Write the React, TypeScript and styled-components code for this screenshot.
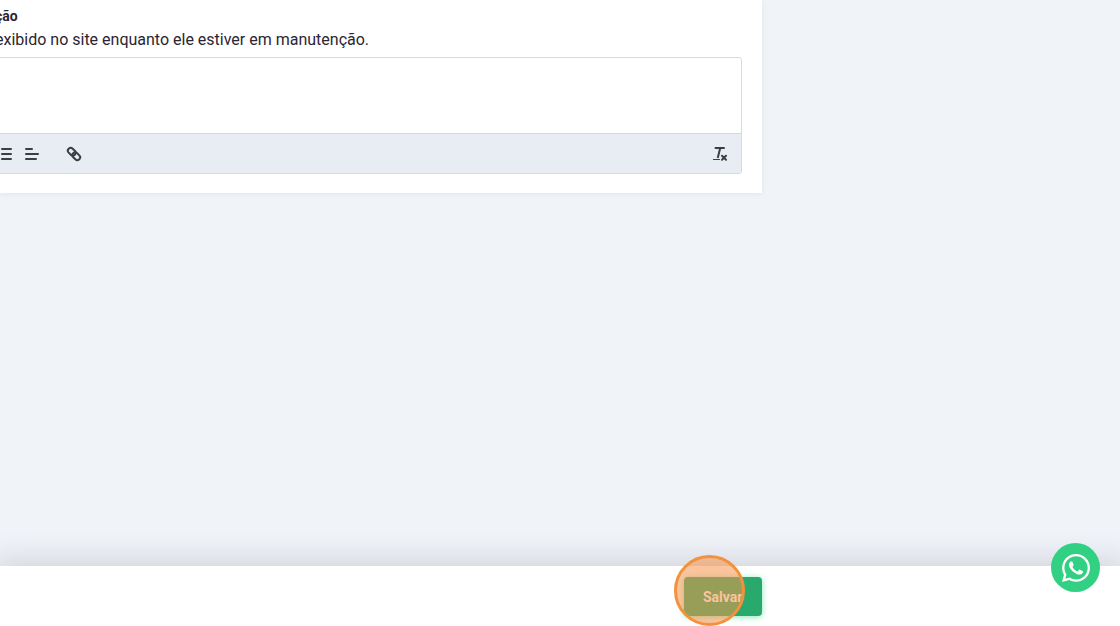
import React from "react";
import styled, { createGlobalStyle } from "styled-components";
import { FaWhatsapp } from "react-icons/fa";

const GlobalStyle = createGlobalStyle`
  *, *::before, *::after { box-sizing: border-box; }
  body {
    margin: 0;
    background: #f0f4f9;
    color: #2b2533;
    font-family: "Liberation Sans Narrow", Roboto, sans-serif;
    font-size: 16px;
    overflow: hidden;
  }
  button, textarea { font: inherit; }
`;

const Page = styled.div`
  display: flex;
  flex-direction: column;
  min-height: 100vh;
`;

const Main = styled.main`
  flex: 1;
`;

const Card = styled.section`
  width: 68%;
  padding: 4px 20px 19px 0;
  background: #fff;
  box-shadow: 0 1px 6px rgba(60, 80, 110, 0.08);
  overflow: hidden;
`;

const Field = styled.div`
  margin-left: -5px;
`;

const Title = styled.label`
  display: block;
  font-size: 14px;
  font-weight: 700;
  line-height: 24px;
`;

const Hint = styled.p`
  margin: 0 0 6px;
  line-height: 23px;
  white-space: nowrap;
`;

const Editor = styled.div`
  border: 1px solid #d5dbe3;
  border-radius: 3px;
  overflow: hidden;
`;

const Message = styled.textarea`
  display: block;
  width: 100%;
  height: 75px;
  padding: 12px;
  border: 0;
  outline: 0;
  resize: none;
  background: #fff;
`;

const Toolbar = styled.div`
  display: flex;
  align-items: center;
  justify-content: space-between;
  height: 40px;
  padding: 0 12px 0 1px;
  border-top: 1px solid #d0d8e2;
  background: #e8edf4;
`;

const Tools = styled.div`
  display: flex;
  gap: 24px;
`;

const ToolGroup = styled.div`
  display: flex;
  gap: 8px;
`;

const Tool = styled.button`
  display: flex;
  align-items: center;
  justify-content: center;
  width: 18px;
  height: 24px;
  padding: 0;
  border: 0;
  background: none;
  color: #3d3d42;
  cursor: pointer;

  svg { display: block; flex: none; }
`;

const Footer = styled.footer`
  height: 60px;
  background: #fff;
  box-shadow: 0 0 30px 6px rgba(70, 60, 75, 0.18);
`;

const Actions = styled.div`
  display: flex;
  justify-content: flex-end;
  width: 68%;
  padding-top: 11px;
`;

const SaveWrap = styled.div`
  position: relative;
`;

const SaveButton = styled.button`
  display: block;
  width: 78px;
  height: 39px;
  padding: 0;
  border: 0;
  border-radius: 4px;
  background: #29aa6c;
  box-shadow: 0 1px 6px rgba(53, 214, 135, 0.6);
  color: #fff;
  font-size: 14px;
  font-weight: 700;
  cursor: pointer;
`;

const ClickMarker = styled.span`
  position: absolute;
  top: -22px;
  left: -10px;
  width: 71px;
  height: 71px;
  border: 3px solid #f2923f;
  border-radius: 50%;
  background: rgba(248, 146, 72, 0.54);
  pointer-events: none;
`;

const WhatsAppLink = styled.a`
  position: fixed;
  right: 20px;
  bottom: 34px;
  display: flex;
  align-items: center;
  justify-content: center;
  width: 49px;
  height: 49px;
  border-radius: 50%;
  background: #31d082;
  color: #fff;
`;

const Lines = ({ d }: { d: string }) => (
  <svg width="16" height="16" viewBox="0 0 16 16" fill="none" stroke="currentColor" strokeWidth="2" strokeLinecap="round">
    <path d={d} />
  </svg>
);

const LinkIcon = () => (
  <svg width="16" height="16" viewBox="0 0 16 16" fill="none" stroke="currentColor" strokeWidth="2">
    <g transform="rotate(45 8 8)">
      <rect x="0.5" y="5.2" width="8.6" height="5.6" rx="2.8" />
      <rect x="6.9" y="5.2" width="8.6" height="5.6" rx="2.8" />
    </g>
  </svg>
);

const ClearIcon = () => (
  <svg width="16" height="16" viewBox="0 0 16 16" fill="none" stroke="currentColor">
    <path d="M3.5 2h8.5" strokeWidth="2" strokeLinecap="round" />
    <path d="M8.2 2 5.7 12" strokeWidth="2" />
    <path d="M1.5 13.5h6" strokeWidth="1.2" strokeLinecap="round" />
    <path d="m10 9.8 4 4m0-4-4 4" strokeWidth="2" strokeLinecap="round" />
  </svg>
);

export default function App() {
  return (
    <Page>
      <GlobalStyle />
      <Main>
        <Card>
          <Field>
            <Title htmlFor="message">ção</Title>
            <Hint id="message-hint">exibido no site enquanto ele estiver em manutenção.</Hint>
            <Editor>
              <Message id="message" aria-describedby="message-hint" />
              <Toolbar>
                <Tools>
                  <ToolGroup>
                    <Tool type="button" aria-label="Lista">
                      <Lines d="M4 3h9M4 8h9M4 13h9" />
                    </Tool>
                    <Tool type="button" aria-label="Alinhamento">
                      <Lines d="M2 3h6M2 8h12M2 13h10" />
                    </Tool>
                  </ToolGroup>
                  <Tool type="button" aria-label="Link">
                    <LinkIcon />
                  </Tool>
                </Tools>
                <Tool type="button" aria-label="Limpar formatação">
                  <ClearIcon />
                </Tool>
              </Toolbar>
            </Editor>
          </Field>
        </Card>
      </Main>
      <Footer>
        <Actions>
          <SaveWrap>
            <SaveButton type="button">Salvar</SaveButton>
            <ClickMarker />
          </SaveWrap>
        </Actions>
      </Footer>
      <WhatsAppLink href="#whatsapp" aria-label="WhatsApp">
        <FaWhatsapp size={32} />
      </WhatsAppLink>
    </Page>
  );
}
